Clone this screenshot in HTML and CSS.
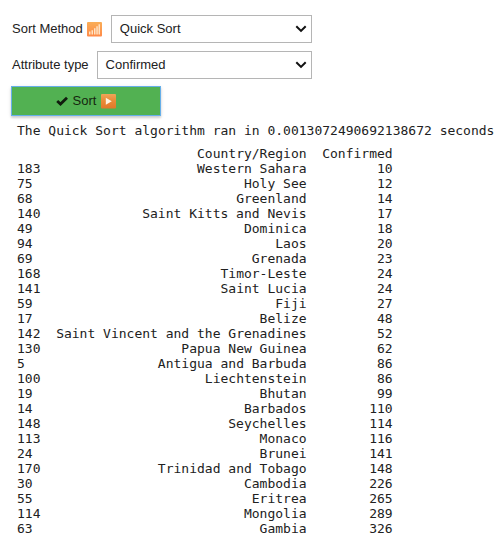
FILE: index.html
```html
<!DOCTYPE html>
<html lang="en">
<head>
<meta charset="utf-8">
<title>Quick Sort</title>
<link rel="stylesheet" href="styles.css">
</head>
<body>
<div class="field">
  <label class="label" for="method">Sort Method
    <svg class="emoji bars" viewBox="0 0 15 15" role="img" aria-label="bars"><defs><linearGradient id="g1" x2="0" y2="1"><stop stop-color="#f9ae57"/><stop offset="1" stop-color="#ff8a48"/></linearGradient></defs><rect width="15" height="14.5" rx="1" fill="url(#g1)"/><path d="M2 9.5h1.5v3H2zM4.5 8.2H6v4.3H4.5zM7 6.3h1.5v6.2H7zM9.3 4.3h1.5v8.2H9.3zM11.5 2.3H13v10.2h-1.5z" fill="#ffe3c4"/></svg>
  </label>
  <div class="select" id="method"><span>Quick Sort</span><svg class="chevron" viewBox="0 0 12 8"><path d="M1.3 1.2 6 5.9l4.7-4.7"/></svg></div>
</div>
<div class="field">
  <label class="label" for="attribute">Attribute type</label>
  <div class="select" id="attribute"><span>Confirmed</span><svg class="chevron" viewBox="0 0 12 8"><path d="M1.3 1.2 6 5.9l4.7-4.7"/></svg></div>
</div>
<button class="sort" type="button">
  <svg class="check" viewBox="0 0 12 10"><path d="M1.2 5 4.5 8.1 11 1.8"/></svg>
  <span>Sort</span>
  <svg class="emoji play" viewBox="0 0 15 15"><defs><linearGradient id="g2" x2="0" y2="1"><stop stop-color="#f0a458"/><stop offset=".5" stop-color="#e98a35"/><stop offset="1" stop-color="#e3772a"/></linearGradient></defs><rect width="15" height="14.5" rx="1" fill="url(#g2)"/><path d="M4.8 3.7 10.8 7.2 4.8 10.8z" fill="#fff3df"/></svg>
</button>
<pre class="message">The Quick Sort algorithm ran in 0.0013072490692138672 seconds</pre>
<div class="frame">
<span></span><span>Country/Region</span><span>Confirmed</span>
<span>183</span><span>Western Sahara</span><span>10</span>
<span>75</span><span>Holy See</span><span>12</span>
<span>68</span><span>Greenland</span><span>14</span>
<span>140</span><span>Saint Kitts and Nevis</span><span>17</span>
<span>49</span><span>Dominica</span><span>18</span>
<span>94</span><span>Laos</span><span>20</span>
<span>69</span><span>Grenada</span><span>23</span>
<span>168</span><span>Timor-Leste</span><span>24</span>
<span>141</span><span>Saint Lucia</span><span>24</span>
<span>59</span><span>Fiji</span><span>27</span>
<span>17</span><span>Belize</span><span>48</span>
<span>142</span><span>Saint Vincent and the Grenadines</span><span>52</span>
<span>130</span><span>Papua New Guinea</span><span>62</span>
<span>5</span><span>Antigua and Barbuda</span><span>86</span>
<span>100</span><span>Liechtenstein</span><span>86</span>
<span>19</span><span>Bhutan</span><span>99</span>
<span>14</span><span>Barbados</span><span>110</span>
<span>148</span><span>Seychelles</span><span>114</span>
<span>113</span><span>Monaco</span><span>116</span>
<span>24</span><span>Brunei</span><span>141</span>
<span>170</span><span>Trinidad and Tobago</span><span>148</span>
<span>30</span><span>Cambodia</span><span>226</span>
<span>55</span><span>Eritrea</span><span>265</span>
<span>114</span><span>Mongolia</span><span>289</span>
<span>63</span><span>Gambia</span><span>326</span>
</div>
</body>
</html>
```
FILE: styles.css
```css
* { box-sizing: border-box; }
body {
  margin: 0;
  padding: 15px 0 0 11px;
  background: #fff;
  color: #212121;
  font: 13px/28px "Liberation Sans", Arial, sans-serif;
  overflow: hidden;
}
.field {
  display: flex;
  width: 301px;
  height: 28px;
  margin-bottom: 8px;
  padding-left: 1px;
}
.label {
  display: flex;
  align-items: center;
  gap: 4px;
  margin-right: 8px;
  white-space: nowrap;
}
.emoji { width: 15px; height: 15px; }
.bars { margin-right: 1px; }
.select {
  display: flex;
  flex: 1;
  align-items: center;
  justify-content: space-between;
  border: 1px solid #b5b5b5;
  padding: 0 4px 0 8px;
  line-height: 26px;
}
.chevron {
  width: 12px;
  height: 8px;
  fill: none;
  stroke: #111;
  stroke-width: 2;
}
.sort {
  display: flex;
  align-items: center;
  justify-content: center;
  width: 150px;
  height: 30px;
  margin-top: -1px;
  padding: 0;
  border: 1px solid #66afe9;
  background: #52b152;
  box-shadow: 0 2px 2px rgba(0, 0, 0, .14), 0 1px 4px rgba(0, 0, 0, .1);
  color: #15260f;
  font: 13px/28px "Liberation Sans", Arial, sans-serif;
}
.check {
  width: 12px;
  height: 10px;
  margin-right: 5px;
  fill: none;
  stroke: #111c0e;
  stroke-width: 2.8;
}
.play { margin-left: 5px; }
.message, .frame {
  margin: 0 0 0 6px;
  font: 13px/15px "DejaVu Sans Mono", monospace;
}
.message { margin-top: 7px; }
.frame {
  display: grid;
  grid-template-columns: 5ch 32ch 11ch;
  grid-auto-rows: 15px;
  margin-top: 8px;
  text-align: right;
  white-space: nowrap;
}
.frame span:nth-child(3n + 1) { text-align: left; }
```
